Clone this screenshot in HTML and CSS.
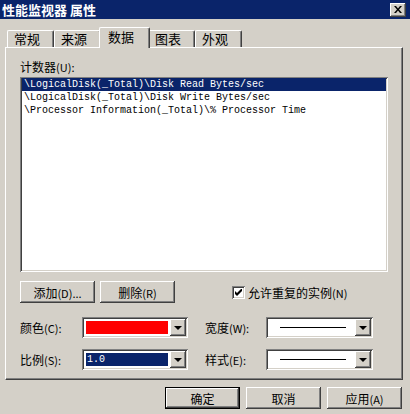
FILE: index.html
```html
<!DOCTYPE html>
<html lang="zh-CN">
<head>
    <meta charset="UTF-8">
    <title>性能监视器 属性</title>
    <link rel="stylesheet" href="styles.css">
</head>
<body>
    <div class="window">
        <div class="titlebar">
            <span class="title">性能监视器 属性</span>
            <button class="close-btn">
                <svg width="8" height="7" viewBox="0 0 8 7">
                    <path d="M0 0h2l2 2.5 2-2.5h2l-3 3.5 3 3.5h-2l-2-2.5-2 2.5h-2l3-3.5z" fill="#000"/>
                </svg>
            </button>
        </div>

        <div class="tabs">
            <div class="tab">常规</div>
            <div class="tab">来源</div>
            <div class="tab active">数据</div>
            <div class="tab">图表</div>
            <div class="tab">外观</div>
        </div>

        <div class="panel">
            <div class="label">计数器<span class="key">(U):</span></div>
            <div class="listbox">
                <div class="row selected">\LogicalDisk(_Total)\Disk Read Bytes/sec</div>
                <div class="row">\LogicalDisk(_Total)\Disk Write Bytes/sec</div>
                <div class="row">\Processor Information(_Total)\% Processor Time</div>
            </div>

            <div class="btn-row">
                <button class="btn">添加<span class="key">(D)...</span></button>
                <button class="btn">删除<span class="key">(R)</span></button>
                <label class="check">
                    <span class="box">
                        <svg width="7" height="7" viewBox="0 0 7 7">
                            <path d="M0 2v3l2 2 5-5v-3l-5 5z" fill="#000"/>
                        </svg>
                    </span>
                    <span>允许重复的实例<span class="key">(N)</span></span>
                </label>
            </div>

            <div class="fields">
                <div class="field">
                    <span class="field-label">颜色<span class="key">(C):</span></span>
                    <div class="combo">
                        <div class="combo-value"><div class="swatch"></div></div>
                        <div class="drop"><i></i></div>
                    </div>
                </div>
                <div class="field">
                    <span class="field-label">宽度<span class="key">(W):</span></span>
                    <div class="combo wide">
                        <div class="combo-value"><div class="line"></div></div>
                        <div class="drop"><i></i></div>
                    </div>
                </div>
                <div class="field">
                    <span class="field-label">比例<span class="key">(S):</span></span>
                    <div class="combo">
                        <div class="combo-value"><div class="picked">1.0</div></div>
                        <div class="drop"><i></i></div>
                    </div>
                </div>
                <div class="field">
                    <span class="field-label">样式<span class="key">(E):</span></span>
                    <div class="combo wide">
                        <div class="combo-value"><div class="line"></div></div>
                        <div class="drop"><i></i></div>
                    </div>
                </div>
            </div>
        </div>

        <div class="footer">
            <button class="btn default">确定</button>
            <button class="btn">取消</button>
            <button class="btn">应用<span class="key">(A)</span></button>
        </div>
    </div>
</body>
</html>
```

FILE: styles.css
```css
* {
    margin: 0;
    padding: 0;
    box-sizing: border-box;
}

body {
    background-color: #d4d0c8;
    font-family: "Noto Sans CJK SC", "Liberation Sans", sans-serif;
    font-size: 12px;
    color: #000;
}

.window {
    width: 410px;
    height: 414px;
    background-color: #d4d0c8;
}

.titlebar {
    height: 19px;
    background-color: #0a246a;
    display: flex;
    align-items: center;
    justify-content: space-between;
    padding: 0 4px 0 2px;
}

.title {
    color: #fff;
    font-weight: bold;
    font-size: 13px;
    line-height: 19px;
}

.close-btn {
    width: 16px;
    height: 14px;
    border: none;
    background-color: #d4d0c8;
    box-shadow: inset -1px -1px #404040, inset 1px 1px #fff, inset -2px -2px #808080;
    display: flex;
    align-items: center;
    justify-content: center;
    padding-bottom: 1px;
}

/* tabs */
.tabs {
    display: flex;
    align-items: flex-end;
    padding-left: 7px;
    margin-top: 8px;
    height: 20px;
    position: relative;
    z-index: 1;
}

.tab {
    width: 47px;
    height: 17px;
    font-size: 13px;
    line-height: 16px;
    padding-left: 6px;
    border-top: 1px solid #fff;
    border-left: 1px solid #fff;
    border-right: 1px solid #404040;
    border-top-left-radius: 2px;
    border-top-right-radius: 2px;
    box-shadow: inset -1px 0 #808080;
    background-color: #d4d0c8;
}

.tab.active {
    width: 51px;
    height: 21px;
    margin: 0 -2px -1px;
    padding-left: 8px;
    line-height: 18px;
    position: relative;
}

/* panel */
.panel {
    width: 398px;
    height: 333px;
    margin-left: 5px;
    border: 1px solid;
    border-color: #fff #404040 #404040 #fff;
    box-shadow: inset -1px -1px #808080;
    padding: 12px 0 0 14px;
}

.label {
    line-height: 14px;
    height: 14px;
    margin-bottom: 3px;
}

.key {
    font-size: 11px;
}

.listbox {
    width: 368px;
    height: 195px;
    background-color: #fff;
    box-shadow: inset 1px 1px #808080, inset -1px -1px #fff, inset 2px 2px #404040, inset -2px -2px #d4d0c8;
    padding: 1px 2px;
    font-family: "Liberation Mono", "DejaVu Sans Mono", monospace;
    font-size: 10px;
}

.row {
    height: 13px;
    line-height: 13px;
    padding-left: 2px;
    white-space: pre;
}

.row.selected {
    background-color: #0a246a;
    color: #fff;
}

/* buttons */
.btn {
    width: 75px;
    height: 22px;
    border: none;
    background-color: #d4d0c8;
    box-shadow: inset -1px -1px #404040, inset 1px 1px #fff, inset -2px -2px #808080;
    font-family: "Noto Sans CJK SC", "Liberation Sans", sans-serif;
    font-size: 12px;
    color: #000;
}

.btn.default {
    border: 1px solid #000;
}

.btn-row {
    display: flex;
    align-items: center;
    gap: 5px;
    margin-top: 9px;
}

.check {
    display: flex;
    align-items: center;
    gap: 3px;
    margin-left: 52px;
}

.check .box {
    width: 13px;
    height: 13px;
    background-color: #fff;
    box-shadow: inset 1px 1px #808080, inset -1px -1px #fff, inset 2px 2px #404040, inset -2px -2px #d4d0c8;
    display: flex;
    align-items: center;
    justify-content: center;
}

/* combo boxes */
.fields {
    display: grid;
    grid-template-columns: 185px 185px;
    row-gap: 11px;
    margin-top: 14px;
}

.field {
    display: flex;
    align-items: center;
}

.field-label {
    width: 62px;
    flex: none;
}

.combo {
    width: 106px;
    height: 21px;
    background-color: #fff;
    box-shadow: inset 1px 1px #808080, inset -1px -1px #fff, inset 2px 2px #404040, inset -2px -2px #d4d0c8;
    padding: 2px;
    display: flex;
}

.combo.wide {
    width: 107px;
    margin-left: -1px;
}

.combo-value {
    flex: 1;
    padding: 2px;
    display: flex;
    align-items: center;
}

.swatch {
    width: 100%;
    height: 13px;
    background-color: #ff0000;
}

.line {
    height: 1px;
    background-color: #000;
    width: 66px;
    margin-left: 10px;
}

.picked {
    width: 100%;
    height: 13px;
    background-color: #0a246a;
    color: #fff;
    font-family: "Liberation Mono", "DejaVu Sans Mono", monospace;
    font-size: 10px;
    line-height: 13px;
    padding-left: 1px;
}

.drop {
    width: 16px;
    background-color: #d4d0c8;
    box-shadow: inset -1px -1px #404040, inset 1px 1px #fff, inset -2px -2px #808080;
    display: flex;
    align-items: center;
    justify-content: center;
}

.drop i {
    border-left: 4px solid transparent;
    border-right: 4px solid transparent;
    border-top: 4px solid #000;
    margin-left: -1px;
}

/* footer */
.footer {
    display: flex;
    justify-content: flex-end;
    gap: 6px;
    padding-right: 8px;
    margin-top: 7px;
}
```
